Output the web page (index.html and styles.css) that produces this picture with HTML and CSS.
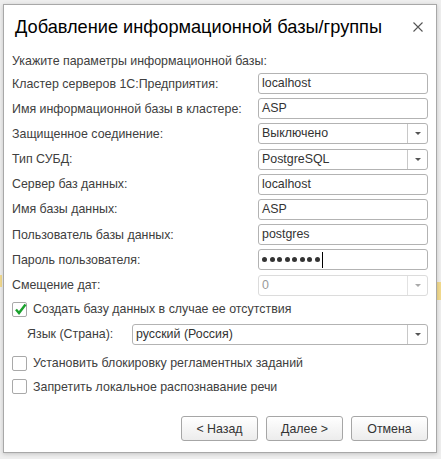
FILE: index.html
```html
<!DOCTYPE html>
<html>
<head>
<meta charset="utf-8">
<link rel="stylesheet" href="styles.css">
</head>
<body>
<div class="dialog">
  <div class="header">
    <div class="title">Добавление информационной базы/группы</div>
    <svg class="close" width="10" height="10" viewBox="0 0 10 10"><path d="M0.5 0.5 L9.5 9.5 M9.5 0.5 L0.5 9.5" stroke="#555" stroke-width="1.1"/></svg>
  </div>
  <div class="body">
    <div class="hint">Укажите параметры информационной базы:</div>
    <div class="row"><span class="label">Кластер серверов 1С:Предприятия:</span><div class="field">localhost</div></div>
    <div class="row"><span class="label">Имя информационной базы в кластере:</span><div class="field">ASP</div></div>
    <div class="row"><span class="label">Защищенное соединение:</span><div class="field select"><span class="val">Выключено</span><span class="drop"><i class="arrow"></i></span></div></div>
    <div class="row"><span class="label">Тип СУБД:</span><div class="field select"><span class="val">PostgreSQL</span><span class="drop"><i class="arrow"></i></span></div></div>
    <div class="row"><span class="label">Сервер баз данных:</span><div class="field">localhost</div></div>
    <div class="row"><span class="label">Имя базы данных:</span><div class="field">ASP</div></div>
    <div class="row"><span class="label">Пользователь базы данных:</span><div class="field">postgres</div></div>
    <div class="row"><span class="label">Пароль пользователя:</span><div class="field pwd"><i class="dot"></i><i class="dot"></i><i class="dot"></i><i class="dot"></i><i class="dot"></i><i class="dot"></i><i class="dot"></i><i class="dot"></i><span class="caret"></span></div></div>
    <div class="row"><span class="label">Смещение дат:</span><div class="field select disabled"><span class="val">0</span><span class="drop"><i class="arrow"></i></span></div></div>
    <div class="check-row first">
      <span class="box"><svg width="15" height="15" viewBox="0 0 15 15"><path d="M3 7.5 L6 11 L12.5 2.5" fill="none" stroke="#1aa12d" stroke-width="2.4"/></svg></span>
      <span class="ctext">Создать базу данных в случае ее отсутствия</span>
    </div>
    <div class="lang-row"><span class="lang-label">Язык (Страна):</span><div class="field select wide"><span class="val">русский (Россия)</span><span class="drop"><i class="arrow"></i></span></div></div>
    <div class="check-row third"><span class="box"></span><span class="ctext">Установить блокировку регламентных заданий</span></div>
    <div class="check-row"><span class="box"></span><span class="ctext">Запретить локальное распознавание речи</span></div>
  </div>
  <div class="footer">
    <div class="btn">&lt; Назад</div>
    <div class="btn">Далее &gt;</div>
    <div class="btn">Отмена</div>
  </div>
</div>
</body>
</html>
```
FILE: styles.css
```css
html, body {
  margin: 0;
  padding: 0;
}
body {
  width: 441px;
  height: 459px;
  background:
    linear-gradient(#f2da8e, #f2da8e) 0 275px / 2px 12px no-repeat,
    linear-gradient(#f2da8e, #f2da8e) 437px 282px / 4px 18px no-repeat,
    #eeeeee;
  font-family: "Liberation Sans", Arial, sans-serif;
  overflow: hidden;
}
.dialog {
  box-sizing: border-box;
  margin: 4px 0 0 3px;
  width: 434px;
  height: 449px;
  background: #ffffff;
  border: 1px solid #a8a8a8;
  box-shadow: 0 1px 4px rgba(0,0,0,0.18);
  display: flex;
  flex-direction: column;
}
.header {
  height: 44px;
  display: flex;
  align-items: center;
  justify-content: space-between;
  padding: 0 13px 0 11px;
}
.title {
  font-size: 18.2px;
  color: #000;
}
.close { display: block; }
.body {
  padding: 5px 8px 0 8px;
  flex: 1;
  color: #404040;
  font-size: 12.4px;
}
.hint {
  height: 15px;
  line-height: 15px;
  margin-bottom: 4px;
}
.row {
  display: flex;
  align-items: center;
  height: 21px;
  margin-bottom: 4.2px;
}
.label {
  width: 246px;
  flex: none;
}
.field {
  box-sizing: border-box;
  width: 170px;
  height: 21px;
  border: 1px solid #b3b3b3;
  border-radius: 3px;
  padding-left: 3px;
  color: #333;
  font-size: 12.4px;
  line-height: 19px;
  display: flex;
  align-items: center;
}
.select .val { flex: 1; }
.drop {
  width: 19px;
  height: 19px;
  border-left: 1px solid #c8c8c8;
  display: flex;
  align-items: center;
  justify-content: center;
}
.arrow {
  width: 0;
  height: 0;
  border-left: 3px solid transparent;
  border-right: 3px solid transparent;
  border-top: 3px solid #555;
}
.disabled {
  border-color: #dcdcdc;
  color: #999;
}
.disabled .drop { border-left-color: #e2e2e2; }
.disabled .arrow { border-top-color: #aaa; }
.dot {
  width: 5px;
  height: 5px;
  border-radius: 50%;
  background: #333;
  margin-right: 2.5px;
  flex: none;
}
.caret {
  width: 1px;
  height: 16px;
  background: #000;
  margin-left: 0;
}
.check-row {
  display: flex;
  align-items: center;
  height: 17px;
  margin-bottom: 6.5px;
}
.check-row.first { margin-top: 5px; margin-bottom: 6px; }
.check-row.third { margin-top: 10px; }
.box {
  box-sizing: border-box;
  width: 15px;
  height: 15px;
  border: 1px solid #a9a9a9;
  border-radius: 2px;
  margin-right: 6px;
  position: relative;
  flex: none;
}
.box svg {
  position: absolute;
  left: 0;
  top: -1px;
}
.ctext { color: #404040; }
.lang-row {
  display: flex;
  align-items: center;
  height: 21px;
  padding-left: 15px;
}
.lang-label { width: 105px; flex: none; }
.wide { width: 297px; }
.footer {
  display: flex;
  justify-content: flex-end;
  gap: 8px;
  padding: 0 8px 11px 0;
}
.btn {
  box-sizing: border-box;
  width: 77px;
  height: 25px;
  border: 1px solid #a6a6a6;
  border-radius: 3px;
  background: linear-gradient(#ffffff, #ececec);
  font-size: 12.4px;
  color: #333;
  display: flex;
  align-items: center;
  justify-content: center;
}
```
